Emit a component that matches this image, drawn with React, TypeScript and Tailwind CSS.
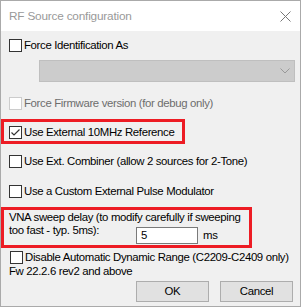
import type { ReactNode } from 'react'

function CheckBox({ checked = false, disabled = false }: { checked?: boolean; disabled?: boolean }) {
  return (
    <span
      className={
        'w-[13px] h-[13px] shrink-0 border bg-white flex items-center justify-center ' +
        (disabled ? 'border-[#cccccc]' : 'border-[#333333]')
      }
    >
      {checked && (
        <svg width="11" height="11" viewBox="0 0 11 11">
          <path d="M1.5 5.5 L4 8 L9.5 2.5" fill="none" stroke="#333" strokeWidth="1.2" />
        </svg>
      )}
    </span>
  )
}

function Row({ children, checked, disabled }: { children: ReactNode; checked?: boolean; disabled?: boolean }) {
  return (
    <div className="flex items-center h-[13px] gap-[2px]">
      <CheckBox checked={checked} disabled={disabled} />
      <span className={'whitespace-nowrap ' + (disabled ? 'text-[#6d6d6d]' : 'text-black')}>{children}</span>
    </div>
  )
}

export default function App() {
  return (
    <div className="w-[302px] h-[308px] bg-white text-[11.4px] tracking-[-0.35px] leading-[13px] font-['Liberation_Sans',sans-serif]">
      <div className="w-[301px] h-[307px] border border-[#aaaaaa] flex flex-col">

        {/* Title bar */}
        <div className="h-[30px] bg-white flex items-center justify-between pl-[8px] pr-[9px]">
          <span className="text-[#999999] text-[11.8px] tracking-[-0.2px]">RF Source configuration</span>
          <svg width="11" height="11" viewBox="0 0 11 11">
            <path d="M0.5 0.5 L10.5 10.5 M10.5 0.5 L0.5 10.5" stroke="#777" strokeWidth="1" />
          </svg>
        </div>

        {/* Body */}
        <div className="flex-1 bg-[#f0f0f0] flex flex-col">
          <div className="pl-[8px] mt-[8px]">
            <Row>Force Identification As</Row>
          </div>

          <div className="ml-[38px] mt-[8px] w-[256px] h-[22px] bg-[#cccccc] border border-[#bfbfbf] flex items-center justify-end pr-[4px]">
            <svg width="10" height="6" viewBox="0 0 10 6">
              <path d="M0.5 0.5 L5 5 L9.5 0.5" fill="none" stroke="#999" strokeWidth="1" />
            </svg>
          </div>

          <div className="pl-[8px] mt-[15px]">
            <Row disabled>Force Firmware version (for debug only)</Row>
          </div>

          <div className="w-[184px] h-[25px] mt-[9px] border-[3px] border-[#ed1c24] pl-[5px] pt-[4px]">
            <Row checked>Use External 10MHz Reference</Row>
          </div>

          <div className="pl-[8px] mt-[11px]">
            <Row>Use Ext. Combiner (allow 2 sources for 2-Tone)</Row>
          </div>

          <div className="pl-[8px] mt-[17px]">
            <Row>Use a Custom External Pulse Modulator</Row>
          </div>

          <div className="w-[251px] h-[41px] mt-[9px] border-[3px] border-[#ed1c24] pl-[5px] pt-[1px]">
            <div className="h-[13px] whitespace-nowrap">VNA sweep delay (to modify carefully if sweeping</div>
            <div className="flex items-start">
              <span className="w-[127px] h-[13px] whitespace-nowrap">too fast - typ. 5ms):</span>
              <div className="mt-[3px] w-[62px] h-[17px] bg-white border border-[#7a7a7a] pl-[4px] flex items-center">5</div>
              <span className="ml-[5px] mt-[5px]">ms</span>
            </div>
          </div>

          <div className="pl-[9px] mt-[3px]">
            <Row>Disable Automatic Dynamic Range (C2209-C2409 only)</Row>
          </div>
          <div className="pl-[8px] mt-[1px] h-[13px]">Fw 22.2.6 rev2 and above</div>

          <div className="flex justify-end gap-[11px] pr-[7px] mt-[3px]">
            <button className="w-[73px] h-[21px] bg-[#e1e1e1] border border-[#adadad] text-black">OK</button>
            <button className="w-[73px] h-[21px] bg-[#e1e1e1] border border-[#adadad] text-black">Cancel</button>
          </div>
        </div>
      </div>
    </div>
  )
}
